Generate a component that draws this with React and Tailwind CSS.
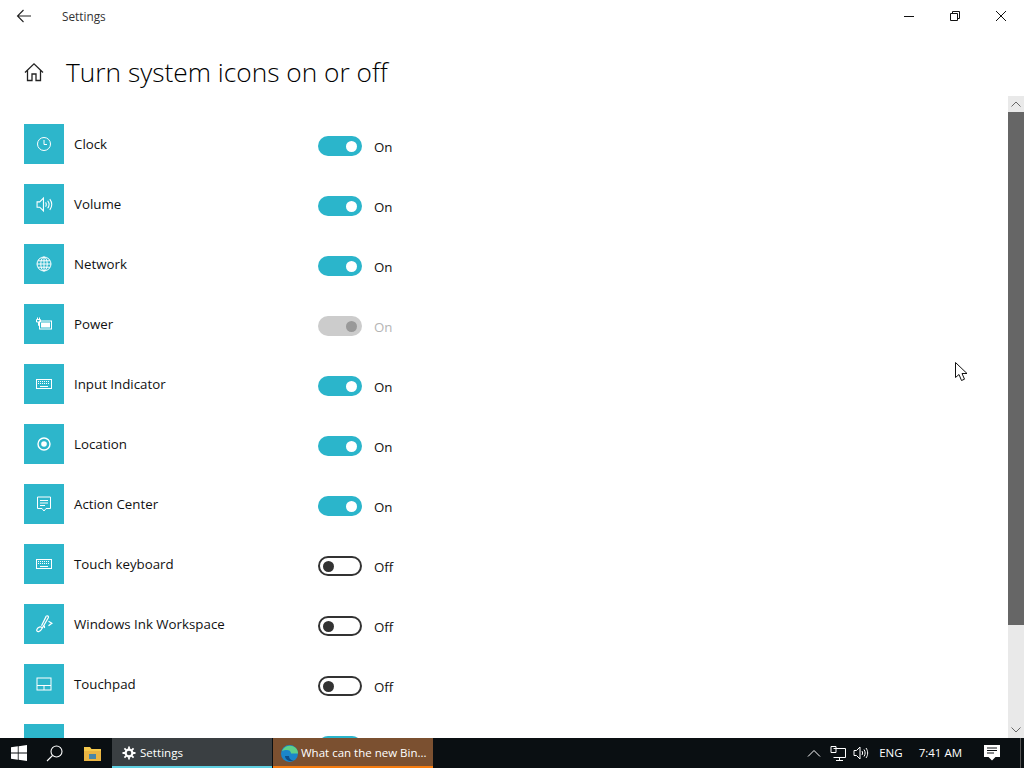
import React from "react";

const Svg = ({ size = 16, children, className = "", sw = 1 }) => (
  <svg width={size} height={size} viewBox="0 0 16 16" fill="none" stroke="currentColor" strokeWidth={sw} className={className}>
    {children}
  </svg>
);

const ClockI = () => (
  <Svg>
    <circle cx="8" cy="8" r="6.500" />
    <path d="M8 4v4.500h3" />
  </Svg>
);
const VolumeI = ({ size = 17 }) => (
  <Svg size={size}>
    <path d="M1 5.500h2.500L7 2v12l-3.500-3.500H1z" />
    <path d="M9 6c.8 1.200.8 2.800 0 4M11 4.500c1.500 2 1.500 5 0 7M13 3c2.200 3 2.200 7 0 10" />
  </Svg>
);
const GlobeI = () => (
  <Svg>
    <circle cx="8" cy="8" r="7" />
    <ellipse cx="8" cy="8" rx="3.200" ry="7" />
    <path d="M1 8h14M2 4.800h12M2 11.200h12M8 1v14" />
  </Svg>
);
const PowerI = () => (
  <Svg>
    <rect x="3.500" y="5" width="12" height="8" />
    <rect x="5" y="6.500" width="9" height="5" fill="currentColor" stroke="none" />
    <path d="M.5 3.500h4v2.500h-4zM1.500 1.500v2M3.500 1.500v2M2.500 6v3.500h1" />
  </Svg>
);
const KeyboardI = () => (
  <Svg>
    <rect x="0.500" y="3.500" width="15" height="9" />
    <path d="M2 5.500h12M2 7.500h12" strokeDasharray="1 1" />
    <path d="M4 10.500h8" />
  </Svg>
);
const LocationI = () => (
  <Svg>
    <circle cx="8" cy="8" r="6" strokeWidth="1.400" />
    <circle cx="8" cy="8" r="2.800" fill="currentColor" stroke="none" />
  </Svg>
);
const ActionI = () => (
  <Svg>
    <path d="M1.500 1h13v11.500h-4.500L8 15l-2-2.500H1.500z" />
    <path d="M4 4.500h8M4 7h8M4 9.500h5" />
  </Svg>
);
const InkI = () => (
  <Svg size={18} sw={1.100}>
    <path d="M10 1c1-.8 2.400.2 1.800 1.400L6.500 11.500c-.8 1.500-1.700 3-3.200 3.300-1.500.2-2.200-1-1.400-2.400 1-1.800 3-2.300 4.200-1.300" />
    <path d="M10 1 5.800 9.500M7.500 9.500c.8.300 1.200 1 .8 2M12 5.500l3 1.800-3 2.200" />
  </Svg>
);
const TouchpadI = () => (
  <Svg>
    <rect x="1" y="2" width="14" height="12" />
    <path d="M1 9.500h14M8 9.500V14" />
  </Svg>
);

const rows = [
  ["Clock", ClockI, "on"],
  ["Volume", VolumeI, "on"],
  ["Network", GlobeI, "on"],
  ["Power", PowerI, "disabled"],
  ["Input Indicator", KeyboardI, "on"],
  ["Location", LocationI, "on"],
  ["Action Center", ActionI, "on"],
  ["Touch keyboard", KeyboardI, "off"],
  ["Windows Ink Workspace", InkI, "off"],
  ["Touchpad", TouchpadI, "off"],
  ["", KeyboardI, "on"],
];

function Toggle({ state }) {
  if (state === "off") {
    return (
      <div className="flex h-5 w-11 items-center rounded-full border-2 border-[#333333] pl-[3px]">
        <div className="h-[11px] w-[11px] rounded-full bg-[#333333]" />
      </div>
    );
  }
  if (state === "disabled") {
    return (
      <div className="flex h-5 w-11 items-center justify-end rounded-full bg-[#cccccc] pr-[5px]">
        <div className="h-[11px] w-[11px] rounded-full bg-[#999999]" />
      </div>
    );
  }
  return (
    <div className="flex h-5 w-11 items-center justify-end rounded-full bg-[#2bb5cb] pr-[5px]">
      <div className="h-[11px] w-[11px] rounded-full bg-white" />
    </div>
  );
}

function Row({ label, Icon, state }) {
  return (
    <div className="flex h-[60px] shrink-0 items-start">
      <div className="flex h-10 w-10 items-center justify-center bg-[#2db6cb] text-white">
        <Icon />
      </div>
      <div className="w-[254px] pl-[10px] pt-[10px] text-[13.300px] leading-5 text-[#111111]">{label}</div>
      <div className="flex items-start pt-3">
        <Toggle state={state} />
        <span className={`ml-3 mt-[1px] text-[13.300px] leading-5 ${state === "disabled" ? "text-[#b5b5b5]" : "text-[#111111]"}`}>
          {label ? (state === "off" ? "Off" : "On") : ""}
        </span>
      </div>
    </div>
  );
}

export default function App() {
  return (
    <div className="relative flex h-[768px] w-[1024px] flex-col overflow-hidden bg-white" style={{ fontFamily: '"Open Sans", "Liberation Sans", sans-serif' }}>
      {/* Title bar */}
      <div className="flex h-8 shrink-0 items-center">
        <div className="flex w-[62px] justify-center pr-[15px] text-[#222222]">
          <svg width="16" height="16" viewBox="0 0 16 16" fill="none" stroke="currentColor" strokeWidth="1.100">
            <path d="M15 8H1.500M7.500 2 1.500 8l6 6" />
          </svg>
        </div>
        <span className="mt-[2px] text-[11.800px] text-[#333333]">Settings</span>
        <div className="ml-auto flex text-[#111111]">
          <div className="flex w-[46px] justify-center">
            <svg width="12" height="12" viewBox="0 0 12 12" stroke="currentColor" fill="none"><path d="M1 6.500h10" /></svg>
          </div>
          <div className="flex w-[46px] justify-center">
            <svg width="12" height="12" viewBox="0 0 12 12" stroke="currentColor" fill="none"><path d="M1.500 3.500h7v7h-7zM3.500 3.500v-2h7v7h-2" /></svg>
          </div>
          <div className="flex w-[46px] justify-center">
            <svg width="12" height="12" viewBox="0 0 12 12" stroke="currentColor" fill="none"><path d="M1 1l10 10M11 1 1 11" /></svg>
          </div>
        </div>
      </div>

      {/* Header */}
      <div className="flex h-16 shrink-0 items-center pl-6 pt-4">
        <svg width="20" height="20" viewBox="0 0 20 20" fill="none" stroke="#222222" strokeWidth="1.300">
          <path d="M1 10.500 10 1.800l9 8.700M3.500 8.500V18.500h4.500v-6.500h4V18.500h4.500V8.500" />
        </svg>
        <h1 className="ml-[22px] text-[26.300px] font-light leading-9 text-black">Turn system icons on or off</h1>
      </div>

      {/* Body */}
      <div className="flex min-h-0 flex-1">
        <div className="min-w-0 flex-1 overflow-hidden pl-6 pt-7">
          {rows.map((r, i) => (
            <Row key={i} label={r[0]} Icon={r[1]} state={r[2]} />
          ))}
        </div>
        <div className="flex w-4 shrink-0 flex-col bg-[#e9e9e9]">
          <div className="flex h-4 items-center justify-center text-[#666666]">
            <svg width="10" height="6" viewBox="0 0 10 6" fill="none" stroke="currentColor"><path d="M.5 5.500 5 1l4.500 4.500" /></svg>
          </div>
          <div className="h-[513px] bg-[#666666]" />
          <div className="flex-1" />
          <div className="flex h-4 items-center justify-center text-[#666666]">
            <svg width="10" height="6" viewBox="0 0 10 6" fill="none" stroke="currentColor"><path d="M.5.500 5 5 9.500.500" /></svg>
          </div>
        </div>
      </div>

      {/* Taskbar */}
      <div className="flex h-[30px] shrink-0 items-stretch bg-[#0a0f12] text-white">
        <div className="flex w-[36px] items-center justify-center pl-[1px]">
          <svg width="16" height="16" viewBox="0 0 16 16" fill="#ffffff"><path d="M0 2.300 6.800 1.300v6.300H0zM7.600 1.200 16 0v7.600H7.600zM0 8.400h6.800v6.300L0 13.700zM7.600 8.400H16V16l-8.400-1.200z" /></svg>
        </div>
        <div className="flex w-[36px] items-center justify-center">
          <svg width="17" height="17" viewBox="0 0 17 17" fill="none" stroke="#ffffff" strokeWidth="1.100"><circle cx="10.500" cy="6.500" r="5.500" /><path d="M6.500 10.500 1 16" /></svg>
        </div>
        <div className="flex w-[40px] items-center justify-center">
          <svg width="17" height="15" viewBox="0 0 17 15"><path d="M0 1h6l1.500 2H17v12H0z" fill="#f5c84c" /><rect x="0" y="5" width="17" height="10" fill="#eab543" /><rect x="5" y="8" width="7" height="5" fill="#4a86a8" /></svg>
        </div>
        <div className="flex w-[160px] items-center border-b-2 border-[#5fd0e2] bg-[#3a3f42] pl-[10px] pt-[2px]">
          <svg width="14" height="14" viewBox="0 0 14 14" fill="none" stroke="#ffffff" className="shrink-0">
            <circle cx="7" cy="7" r="3.400" strokeWidth="2.200" />
            <path d="M7 0.500v2.500M7 11v2.500M.5 7H3M11 7h2.500M2.400 2.400l1.800 1.800M9.800 9.800l1.800 1.800M11.600 2.400 9.800 4.200M4.200 9.800l-1.800 1.800" strokeWidth="1.800" />
          </svg>
          <span className="ml-[4px] text-[11.600px]">Settings</span>
        </div>
        <div className="ml-[1px] flex w-[160px] items-center overflow-hidden border-b-2 border-[#f57c10] bg-[#7b5030] pl-2 pt-[2px]">
          <svg width="17" height="17" viewBox="0 0 17 17" className="shrink-0">
            <circle cx="8.500" cy="8.500" r="8.500" fill="#1b86c9" />
            <path d="M1 6C3 1 9-.5 13.500 2c3 1.700 3.500 4.500 3.500 6.500H10C10 6 8 5 6 5 4 5 2 5.500 1 6z" fill="#5ed08a" />
            <path d="M4 11c0 3 3 5 6 5 1 0 2-.3 3-.8-3 .5-5-1.500-5-4.200z" fill="#0d4f8a" />
          </svg>
          <span className="ml-[3px] text-[11.500px] whitespace-nowrap">What can the new Bin...</span>
        </div>
        <div className="ml-auto flex items-center pr-[4px]">
          <svg width="14" height="8" viewBox="0 0 14 8" fill="none" stroke="#ffffff" className="mr-[9px]"><path d="M1 7.500 7 1.500l6 6" /></svg>
          <svg width="16" height="15" viewBox="0 0 16 15" fill="none" stroke="#ffffff" className="mr-[7px]"><path d="M3.500 2.500H15.500v9H3.500M1 .5h5v6H1zM9.500 11.500v3M6 14.500h7" /></svg>
          <span className="mr-[10px] text-white"><VolumeI size={16} /></span>
          <span className="mr-[16px] text-[11.500px]">ENG</span>
          <span className="mr-[22px] text-[11.500px] whitespace-nowrap">7:41 AM</span>
          <svg width="16" height="16" viewBox="0 0 16 16" className="mr-[20px]">
            <path d="M0 0h16v12h-4.500L8 15.500 4.500 12H0z" fill="#ffffff" />
            <path d="M3 3h10M3 5.500h10M3 8h7" stroke="#0a0f12" />
          </svg>
          <div className="absolute right-[3px] bottom-0 h-[30px] w-px bg-[#555555]" />
        </div>
      </div>

      {/* Mouse pointer */}
      <svg width="14" height="21" viewBox="0 0 14 21" className="absolute left-[955px] top-[362px]" fill="#ffffff" stroke="#111111" strokeWidth="1">
        <path d="M.5.500V15.500l3.500-3 2.500 6 3-1.300-2.500-5.700H12z" />
      </svg>
    </div>
  );
}
